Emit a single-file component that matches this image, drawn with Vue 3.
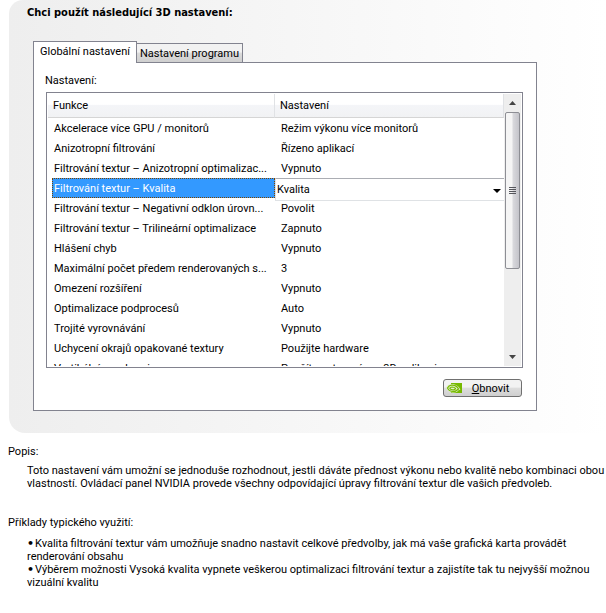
<script setup>
import { ref } from 'vue'

const tab = ref('global')
const selected = ref(3)
const quality = ref('Kvalita')

const rows = [
  { name: 'Akcelerace více GPU / monitorů', value: 'Režim výkonu více monitorů' },
  { name: 'Anizotropní filtrování', value: 'Řízeno aplikací' },
  { name: 'Filtrování textur – Anizotropní optimalizac...', value: 'Vypnuto' },
  { name: 'Filtrování textur – Kvalita', value: 'Kvalita' },
  { name: 'Filtrování textur – Negativní odklon úrovn...', value: 'Povolit' },
  { name: 'Filtrování textur – Trilineární optimalizace', value: 'Zapnuto' },
  { name: 'Hlášení chyb', value: 'Vypnuto' },
  { name: 'Maximální počet předem renderovaných s...', value: '3' },
  { name: 'Omezení rozšíření', value: 'Vypnuto' },
  { name: 'Optimalizace podprocesů', value: 'Auto' },
  { name: 'Trojité vyrovnávání', value: 'Vypnuto' },
  { name: 'Uchycení okrajů opakované textury', value: 'Použijte hardware' },
  { name: 'Vertikální synchronizace', value: 'Použít nastavení pro 3D aplikaci' },
]
</script>

<template>
  <main class="page">
    <section class="panel">
      <h1 class="title">Chci použít následující 3D nastavení:</h1>

      <div class="tabs" role="tablist">
        <button class="tab" :class="{ active: tab === 'global' }" role="tab" :aria-selected="tab === 'global'" @click="tab = 'global'">Globální nastavení</button>
        <button class="tab" :class="{ active: tab === 'program' }" role="tab" :aria-selected="tab === 'program'" @click="tab = 'program'">Nastavení programu</button>
      </div>

      <div class="sheet">
        <h2 id="list-label" class="label">Nastavení:</h2>

        <div class="list">
          <div class="viewport">
            <table class="grid" aria-labelledby="list-label">
              <colgroup>
                <col class="col-name" />
                <col />
              </colgroup>
              <thead>
                <tr>
                  <th>Funkce</th>
                  <th>Nastavení</th>
                </tr>
              </thead>
              <tbody>
                <tr v-for="(row, i) in rows" :key="row.name" :class="{ selected: i === selected }">
                  <td><span class="name">{{ row.name }}</span></td>
                  <td v-if="i === selected" class="editor">
                    <label class="combo">
                      <select v-model="quality" aria-label="Filtrování textur – Kvalita">
                        <option>Kvalita</option>
                      </select>
                      <svg class="chevron" width="8" height="4" viewBox="0 0 8 4" aria-hidden="true"><path d="M0 0h8L4 4z" /></svg>
                    </label>
                  </td>
                  <td v-else><span class="name">{{ row.value }}</span></td>
                </tr>
              </tbody>
            </table>
          </div>

          <div class="scrollbar" aria-hidden="true">
            <span class="arrow"><svg width="7" height="4" viewBox="0 0 7 4"><path d="M0 4L3.500 0L7 4z" /></svg></span>
            <div class="track">
              <div class="thumb"><i></i><i></i><i></i><i></i></div>
            </div>
            <span class="arrow"><svg width="7" height="4" viewBox="0 0 7 4"><path d="M0 0L3.500 4L7 0z" /></svg></span>
          </div>
        </div>

        <div class="actions">
          <button class="restore">
            <svg class="logo" width="16" height="11" viewBox="0 0 16 11" aria-hidden="true">
              <path fill="#76b900" d="M5 0h11v10H5z" />
              <path fill="#e3eed0" d="M5 1C1.500 1.500.500 4 0 5c1.500 3 3.500 4 6 4.500C10 10 13 8 14.500 7 13 3 9 .500 5 1z" />
              <g fill="none" stroke="#76b900" stroke-width="1.200">
                <path d="M5.500 2.200C3.500 2.500 2 4 1.500 5c1 2 3 3.500 5.500 3.500 2.500 0 4.500-1.500 5.500-2.500C11 3 8 2 5.500 2.200z" />
                <path d="M6 4C4.500 4.200 3.800 4.800 3.800 5.300 4.500 6.500 6 7 7.500 6.800 9 6.500 9.500 5.800 9.500 5.500 8.500 4.300 7.500 4 6 4z" />
              </g>
              <path fill="#76b900" d="M12 7.500l4-1.500v4h-5z" />
            </svg>
            <span class="restore-text"><u>O</u>bnovit</span>
          </button>
        </div>
      </div>
    </section>

    <section class="info">
      <h2 class="label">Popis:</h2>
      <p class="text">Toto nastavení vám umožní se jednoduše rozhodnout, jestli dáváte přednost výkonu nebo kvalitě nebo kombinaci obou vlastností. Ovládací panel NVIDIA provede všechny odpovídající úpravy filtrování textur dle vašich předvoleb.</p>
    </section>

    <section class="info examples">
      <h2 class="label">Příklady typického využití:</h2>
      <ul class="text">
        <li>Kvalita filtrování textur vám umožňuje snadno nastavit celkové předvolby, jak má vaše grafická karta provádět renderování obsahu</li>
        <li>Výběrem možnosti Vysoká kvalita vypnete veškerou optimalizaci filtrování textur a zajistíte tak tu nejvyšší možnou vizuální kvalitu</li>
      </ul>
    </section>
  </main>
</template>

<style>
body {
  background: #fff;
}
</style>

<style scoped>
.page,
.page button,
.page select {
  font-family: Tahoma, Roboto, "DejaVu Sans Condensed", sans-serif;
  font-size: 11px;
  line-height: 13px;
  color: #000;
}

.panel {
  margin-left: 9px;
  padding: 6px 69px 22px 24px;
  border-radius: 14px 0 0 16px;
  background: linear-gradient(90deg, #eee, #fff);
}

.title {
  margin: 0 0 21px -6px;
  font-family: Tahoma, "DejaVu Sans Condensed", sans-serif;
  font-size: 11px;
  line-height: 14px;
}

.tabs {
  display: flex;
  align-items: flex-end;
}

.tab {
  height: 20px;
  margin: 0 0 -1px -1px;
  padding: 0 3px;
  border: 1px solid #82838f;
  background: linear-gradient(#f2f2f2 45%, #dcdcdc 50%, #cfcfcf);
  white-space: nowrap;
}

.tab.active {
  position: relative;
  height: 22px;
  margin-left: 0;
  padding: 0 6px 2px;
  border-bottom: 0;
  background: #fff;
}

.sheet {
  padding: 11px 13px 13px 11px;
  border: 1px solid #82838f;
  background: #fff;
}

.label {
  margin: 0;
  font-size: 11px;
  font-weight: normal;
}

.list {
  display: flex;
  height: 272px;
  margin: 5px 0 11px 1px;
  padding: 1px;
  border: 1px solid #82838f;
}

.viewport {
  flex: 1;
  min-width: 0;
  overflow: hidden;
}

.grid {
  width: 100%;
  table-layout: fixed;
  border-collapse: separate;
  border-spacing: 0;
}

.col-name {
  width: 227px;
}

.grid th {
  height: 23px;
  padding: 0 5px;
  border-right: 1px solid #e0e2e5;
  border-bottom: 1px solid #d5d5d5;
  background: linear-gradient(#fff 45%, #f4f5f8 50%, #f1f2f4);
  font-weight: normal;
  text-align: left;
}

.grid td {
  height: 20px;
  padding: 0 0 0 4px;
  white-space: nowrap;
}

.name {
  display: block;
  padding: 1px 1px 0;
  border: 1px dotted transparent;
  line-height: 17px;
}

.selected .name {
  border-color: #7a4400;
  background: #39f;
  color: #fff;
}

.grid td.editor {
  padding: 0;
}

.combo {
  position: relative;
  display: flex;
  height: 20px;
}

.combo select {
  flex: 1;
  height: 23px;
  padding: 0 1px 1px;
  border: 1px solid #dfe2e5;
  border-top-color: #abadb3;
  border-right: 0;
  border-radius: 0;
  appearance: none;
  background: #fff;
}

.chevron {
  position: absolute;
  top: 11px;
  right: 3px;
}

.scrollbar {
  display: flex;
  flex-direction: column;
  width: 17px;
  background: #eee;
}

.arrow {
  display: flex;
  align-items: center;
  justify-content: center;
  height: 18px;
  fill: #444;
}

.track {
  flex: 1;
}

.thumb {
  display: flex;
  flex-direction: column;
  align-items: center;
  justify-content: center;
  gap: 1px;
  box-sizing: border-box;
  width: 15px;
  height: 157px;
  margin: 0 auto;
  border: 1px solid #8d8e94;
  border-radius: 2px;
  background: linear-gradient(90deg, #f5f5f5 45%, #d8d8dc 55%, #c4c4ca);
}

.thumb i {
  width: 7px;
  height: 1px;
  background: #55565c;
}

.actions {
  display: flex;
  justify-content: flex-end;
  padding-right: 1px;
}

.restore {
  display: flex;
  align-items: center;
  width: 79px;
  height: 18px;
  padding: 0 2px;
  border: 1px solid #707070;
  border-radius: 3px;
  background: linear-gradient(#f2f2f2 45%, #ddd 50%, #cfcfcf);
}

.restore-text {
  flex: 1;
  text-align: center;
}

.info {
  padding: 12px 0 0 8px;
}

.text {
  margin: 6px 0 0 19px;
  padding: 0;
  list-style: none;
}

.examples {
  padding-top: 26px;
}

.examples .text {
  margin-top: 8px;
}

.text li::before {
  content: "•";
  margin-right: 1px;
  font-family: "DejaVu Sans", sans-serif;
  font-weight: bold;
}
</style>
